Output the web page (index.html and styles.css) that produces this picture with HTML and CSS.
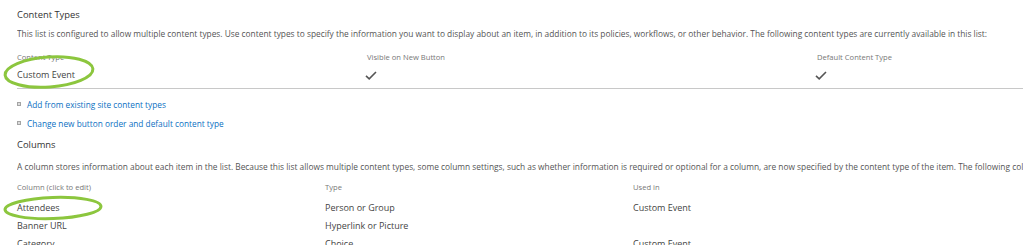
FILE: index.html
```html
<!DOCTYPE html>
<html>
<head>
<meta charset="utf-8">
<link rel="stylesheet" href="styles.css">
</head>
<body>
<div class="page">
  <h2 class="heading h-ct">Content Types</h2>
  <p class="desc d-ct">This list is configured to allow multiple content types. Use content types to specify the information you want to display about an item, in addition to its policies, workflows, or other behavior. The following content types are currently available in this list:</p>
  <div class="ct-table">
    <div class="ct-head">
      <span class="label">Content Type</span>
      <span class="label">Visible on New Button</span>
      <span class="label">Default Content Type</span>
    </div>
    <div class="ct-row">
      <span class="cell">Custom Event</span>
      <span class="cell"><svg class="check" width="12" height="9" viewBox="0 0 12 9"><path d="M1 4.8 L4.2 7.8 L11 1" fill="none" stroke="#555" stroke-width="1.6"/></svg></span>
      <span class="cell"><svg class="check" width="12" height="9" viewBox="0 0 12 9"><path d="M1 4.8 L4.2 7.8 L11 1" fill="none" stroke="#555" stroke-width="1.6"/></svg></span>
    </div>
  </div>
  <ul class="links">
    <li class="link-item l1"><span class="bullet"></span><a class="link">Add from existing site content types</a></li>
    <li class="link-item l2"><span class="bullet"></span><a class="link">Change new button order and default content type</a></li>
  </ul>
  <h2 class="heading h-col">Columns</h2>
  <p class="desc d-col">A column stores information about each item in the list. Because this list allows multiple content types, some column settings, such as whether information is required or optional for a column, are now specified by the content type of the item. The following columns are currently available in this list:</p>
  <div class="col-table">
    <div class="col-head">
      <span class="label">Column (click to edit)</span>
      <span class="label">Type</span>
      <span class="label">Used in</span>
    </div>
    <div class="col-row">
      <span class="cell">Attendees</span>
      <span class="cell">Person or Group</span>
      <span class="cell">Custom Event</span>
    </div>
    <div class="col-row">
      <span class="cell">Banner URL</span>
      <span class="cell">Hyperlink or Picture</span>
      <span class="cell"></span>
    </div>
    <div class="col-row">
      <span class="cell">Category</span>
      <span class="cell">Choice</span>
      <span class="cell">Custom Event</span>
    </div>
  </div>
</div>
<svg class="mark mark-1" width="110" height="40" viewBox="0 0 110 40">
  <ellipse cx="49" cy="20" rx="44" ry="15" transform="rotate(-4 49 20)" fill="none" stroke="#8cc63e" stroke-width="3"/>
</svg>
<svg class="mark mark-2" width="110" height="34" viewBox="0 0 110 34">
  <ellipse cx="53" cy="17" rx="48" ry="10.5" transform="rotate(-2 53 17)" fill="none" stroke="#8cc63e" stroke-width="3"/>
</svg>
</body>
</html>
```
FILE: styles.css
```css
html, body {
  margin: 0;
  padding: 0;
  background: #ffffff;
  overflow: hidden;
}
body {
  width: 1023px;
  height: 245px;
  position: relative;
  font-family: "Open Sans", "Noto Sans", sans-serif;
  color: #444;
}
.page {
  padding-left: 17px;
  display: flex;
  flex-direction: column;
  white-space: nowrap;
}
.heading {
  margin: 0;
  font-weight: normal;
  font-size: 9.4px;
  line-height: 14px;
  color: #333;
}
.h-ct { margin-top: 8px; }
.h-col { margin-top: 8px; }
.desc {
  margin: 0;
  font-size: 8.35px;
  line-height: 14px;
  color: #555;
  overflow: hidden;
}
.d-ct { margin-top: 5px; }
.d-col { margin-top: 8px; }
.ct-table {
  margin-top: 9px;
  border-bottom: 1px solid #c8c8c8;
  padding-bottom: 4px;
}
.ct-head, .ct-row {
  display: grid;
  grid-template-columns: 350px 450px 1fr;
}
.col-table {
  margin-top: 6px;
}
.col-head, .col-row {
  display: grid;
  grid-template-columns: 308px 308px 1fr;
}
.label {
  font-size: 7.6px;
  line-height: 14px;
  color: #777;
}
.cell {
  font-size: 9px;
  line-height: 18px;
  color: #444;
  display: flex;
  align-items: center;
}
.ct-row { margin-top: 2px; }
.col-head + .col-row { margin-top: 5px; }
.check { display: block; margin-left: -2px; }
.links {
  list-style: none;
  margin: 8px 0 0 0;
  padding: 0;
}
.link-item {
  display: flex;
  align-items: center;
  height: 14px;
}
.l2 { margin-top: 5px; }
.bullet {
  width: 2px;
  height: 2px;
  border: 1px solid #a4a4a4;
  background: #dcdcdc;
  margin-right: 6px;
}
.link {
  font-size: 8.3px;
  color: #0b6fc2;
  text-decoration: none;
}
.mark {
  position: absolute;
}
.mark-1 { left: 0; top: 52px; }
.mark-2 { left: 0; top: 191px; }
```
